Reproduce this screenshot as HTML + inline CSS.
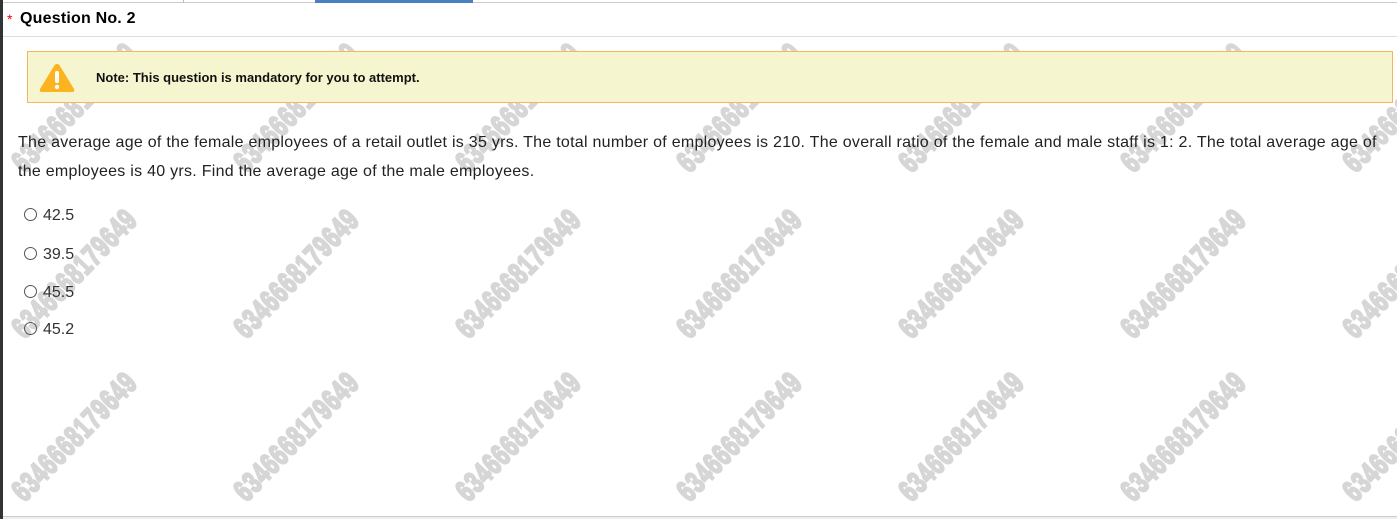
<!DOCTYPE html>
<html><head><meta charset="utf-8"><style>
*{margin:0;padding:0;box-sizing:border-box}
body{width:1397px;height:519px;overflow:hidden;background:#fff;font-family:"Liberation Sans",Arial,sans-serif;position:relative;color:#222}
.lb{position:absolute;left:0;top:0;width:3px;height:519px;background:#333}
.tabs{position:absolute;left:3px;top:0;width:1394px;height:3px;border-bottom:1px solid #ccc}
.tabblue{position:absolute;left:315px;top:0;width:158px;height:3px;background:#4a7fc1}
.tabsep{position:absolute;top:0;width:1px;height:3px;background:#bbb}
.hdr{position:absolute;left:3px;top:4px;width:1394px;height:33px;border-bottom:1px solid #ddd}
.star{position:absolute;left:7px;top:11px;color:#e00;font-size:14px}
.qno{position:absolute;left:20px;top:10px;font-size:16px;font-weight:bold;color:#000;letter-spacing:0.2px}
.wm{position:absolute;width:200px;text-align:center;font-size:21px;font-weight:bold;letter-spacing:1px;color:#d6d6d6;-webkit-text-stroke:1.6px #d6d6d6;transform:translate(-50%,-50%) rotate(-46deg) scaleY(1.45);white-space:nowrap;z-index:1;line-height:1}
.note{position:absolute;left:27px;top:51px;width:1366px;height:52px;background:#f5f5cf;border:1px solid #f7b461;z-index:2}
.note span{position:absolute;left:68px;top:18px;font-size:13px;font-weight:bold;color:#111}
.note svg{position:absolute;left:10px;top:10px}
.q{position:absolute;left:18px;top:128px;width:1378px;font-size:16px;letter-spacing:0.27px;line-height:29px;color:#222;z-index:3}
.opt{position:absolute;left:24px;font-size:16px;color:#333;z-index:3}
.opt i{display:inline-block;width:13px;height:13px;border:1px solid #555;border-radius:50%;vertical-align:-1px;margin-right:6px;background:transparent}
.bot{position:absolute;left:3px;top:516px;width:1394px;height:3px;border-top:1px solid #ccc;background:#eee}
</style></head><body>
<div class="lb"></div>
<div class="tabs"></div>
<div class="tabsep" style="left:183px"></div>
<div class="tabblue"></div>
<div class="hdr"></div>
<div class="star">*</div>
<div class="qno">Question No. 2</div>

<div class="wm" style="left:75px;top:108px">6346668179649</div>
<div class="wm" style="left:297px;top:108px">6346668179649</div>
<div class="wm" style="left:519px;top:108px">6346668179649</div>
<div class="wm" style="left:740px;top:108px">6346668179649</div>
<div class="wm" style="left:962px;top:108px">6346668179649</div>
<div class="wm" style="left:1184px;top:108px">6346668179649</div>
<div class="wm" style="left:1406px;top:108px">6346668179649</div>
<div class="wm" style="left:75px;top:274px">6346668179649</div>
<div class="wm" style="left:297px;top:274px">6346668179649</div>
<div class="wm" style="left:519px;top:274px">6346668179649</div>
<div class="wm" style="left:740px;top:274px">6346668179649</div>
<div class="wm" style="left:962px;top:274px">6346668179649</div>
<div class="wm" style="left:1184px;top:274px">6346668179649</div>
<div class="wm" style="left:1406px;top:274px">6346668179649</div>
<div class="wm" style="left:75px;top:437px">6346668179649</div>
<div class="wm" style="left:297px;top:437px">6346668179649</div>
<div class="wm" style="left:519px;top:437px">6346668179649</div>
<div class="wm" style="left:740px;top:437px">6346668179649</div>
<div class="wm" style="left:962px;top:437px">6346668179649</div>
<div class="wm" style="left:1184px;top:437px">6346668179649</div>
<div class="wm" style="left:1406px;top:437px">6346668179649</div>

<div class="note">
<svg width="38" height="32" viewBox="0 0 38 32"><path d="M19 2 Q21 2 22 4 L36 27 Q37 30 34 30 L4 30 Q1 30 2 27 L16 4 Q17 2 19 2Z" fill="#fbb320"/><rect x="17" y="9" width="4" height="12" rx="2" fill="#fff"/><circle cx="19" cy="25" r="2.2" fill="#fff"/></svg>
<span>Note: This question is mandatory for you to attempt.</span>
</div>

<div class="q">The average age of the female employees of a retail outlet is 35 yrs. The total number of employees is 210. The overall ratio of the female and male staff is 1: 2. The total average age of the employees is 40 yrs. Find the average age of the male employees.</div>

<div class="opt" style="top:207px"><i></i>42.5</div>
<div class="opt" style="top:246px"><i></i>39.5</div>
<div class="opt" style="top:284px"><i></i>45.5</div>
<div class="opt" style="top:321px"><i></i>45.2</div>
<div class="bot"></div>
</body></html>
